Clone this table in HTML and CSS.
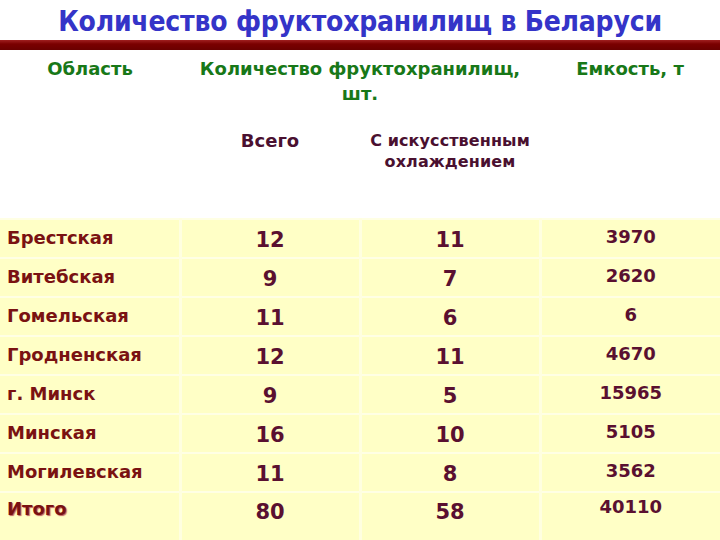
FILE: index.html
```html
<!DOCTYPE html>
<html lang="ru">
<head>
<meta charset="utf-8">
<title>Количество фруктохранилищ в Беларуси</title>
<link rel="stylesheet" href="styles.css">
</head>
<body>
<h1 class="title">Количество фруктохранилищ в Беларуси</h1>
<div class="bar"></div>
<table class="data">
  <colgroup><col class="c"><col class="c"><col class="c"><col class="c"></colgroup>
  <thead>
    <tr class="h1row">
      <th class="hg">Область</th>
      <th class="hg" colspan="2">Количество фруктохранилищ,<br>шт.</th>
      <th class="hg">Емкость, т</th>
    </tr>
    <tr class="h2row">
      <th></th>
      <th class="hm">Всего</th>
      <th class="hm small">С искусственным<br>охлаждением</th>
      <th></th>
    </tr>
  </thead>
  <tbody>
    <tr><td class="lbl">Брестская</td><td class="num">12</td><td class="num">11</td><td class="cap">3970</td></tr>
    <tr><td class="lbl">Витебская</td><td class="num">9</td><td class="num">7</td><td class="cap">2620</td></tr>
    <tr><td class="lbl">Гомельская</td><td class="num">11</td><td class="num">6</td><td class="cap">6</td></tr>
    <tr><td class="lbl">Гродненская</td><td class="num">12</td><td class="num">11</td><td class="cap">4670</td></tr>
    <tr><td class="lbl">г. Минск</td><td class="num">9</td><td class="num">5</td><td class="cap">15965</td></tr>
    <tr><td class="lbl">Минская</td><td class="num">16</td><td class="num">10</td><td class="cap">5105</td></tr>
    <tr><td class="lbl">Могилевская</td><td class="num">11</td><td class="num">8</td><td class="cap">3562</td></tr>
    <tr class="last"><td class="lbl total">Итого</td><td class="num">80</td><td class="num">58</td><td class="cap">40110</td></tr>
  </tbody>
</table>
</body>
</html>
```
FILE: styles.css
```css
html, body {
  margin: 0;
  padding: 0;
  background: #ffffff;
  width: 720px;
  height: 540px;
  overflow: hidden;
  font-family: "DejaVu Sans", Verdana, sans-serif;
}
.title {
  margin: 0;
  height: 40px;
  line-height: 44px;
  text-align: center;
  font-family: "DejaVu Sans Condensed", "DejaVu Sans", sans-serif;
  font-weight: bold;
  font-size: 28px;
  color: #3434c8;
  letter-spacing: -0.2px;
}
.bar {
  height: 10px;
  background: linear-gradient(#a02020 0%, #7a0000 40%, #6a0000 100%);
}
.data {
  width: 720px;
  border-collapse: collapse;
  table-layout: fixed;
}
.c { width: 180px; }
th {
  font-weight: bold;
  font-size: 18px;
  vertical-align: top;
  padding: 0;
}
.h1row { height: 75px; }
.h1row th {
  padding-top: 6px;
  line-height: 25px;
}
.hg { color: #187818; }
.h2row { height: 94px; }
.h2row th {
  padding-top: 5px;
  line-height: 21px;
}
.hm { color: #4a1030; }
.hm.small {
  font-size: 16px;
  letter-spacing: 0.1px;
}
tbody tr { height: 39px; }
tbody tr.last { height: 49px; }
tbody td {
  background: #ffffc6;
  border-top: 2px solid #ffffe4;
  border-left: 3px solid #ffffe0;
  padding: 0;
  vertical-align: middle;
  font-weight: bold;
  color: #5a1030;
}
tbody tr.last td { vertical-align: top; }
tbody td:first-child { border-left: none; }
.lbl {
  color: #7a1212;
  font-size: 18px;
  padding-left: 7px;
  padding-bottom: 3px;
}
.num {
  text-align: center;
  font-size: 21px;
  padding-top: 3px;
}
.cap {
  text-align: center;
  font-size: 18px;
  padding-bottom: 5px;
}
tbody tr.last .lbl { padding-top: 5px; padding-bottom: 0; }
tbody tr.last .num { padding-top: 7px; }
tbody tr.last .cap { padding-top: 3px; padding-bottom: 0; }
.total { text-shadow: 1px 1px 1px #c06060; }
```
